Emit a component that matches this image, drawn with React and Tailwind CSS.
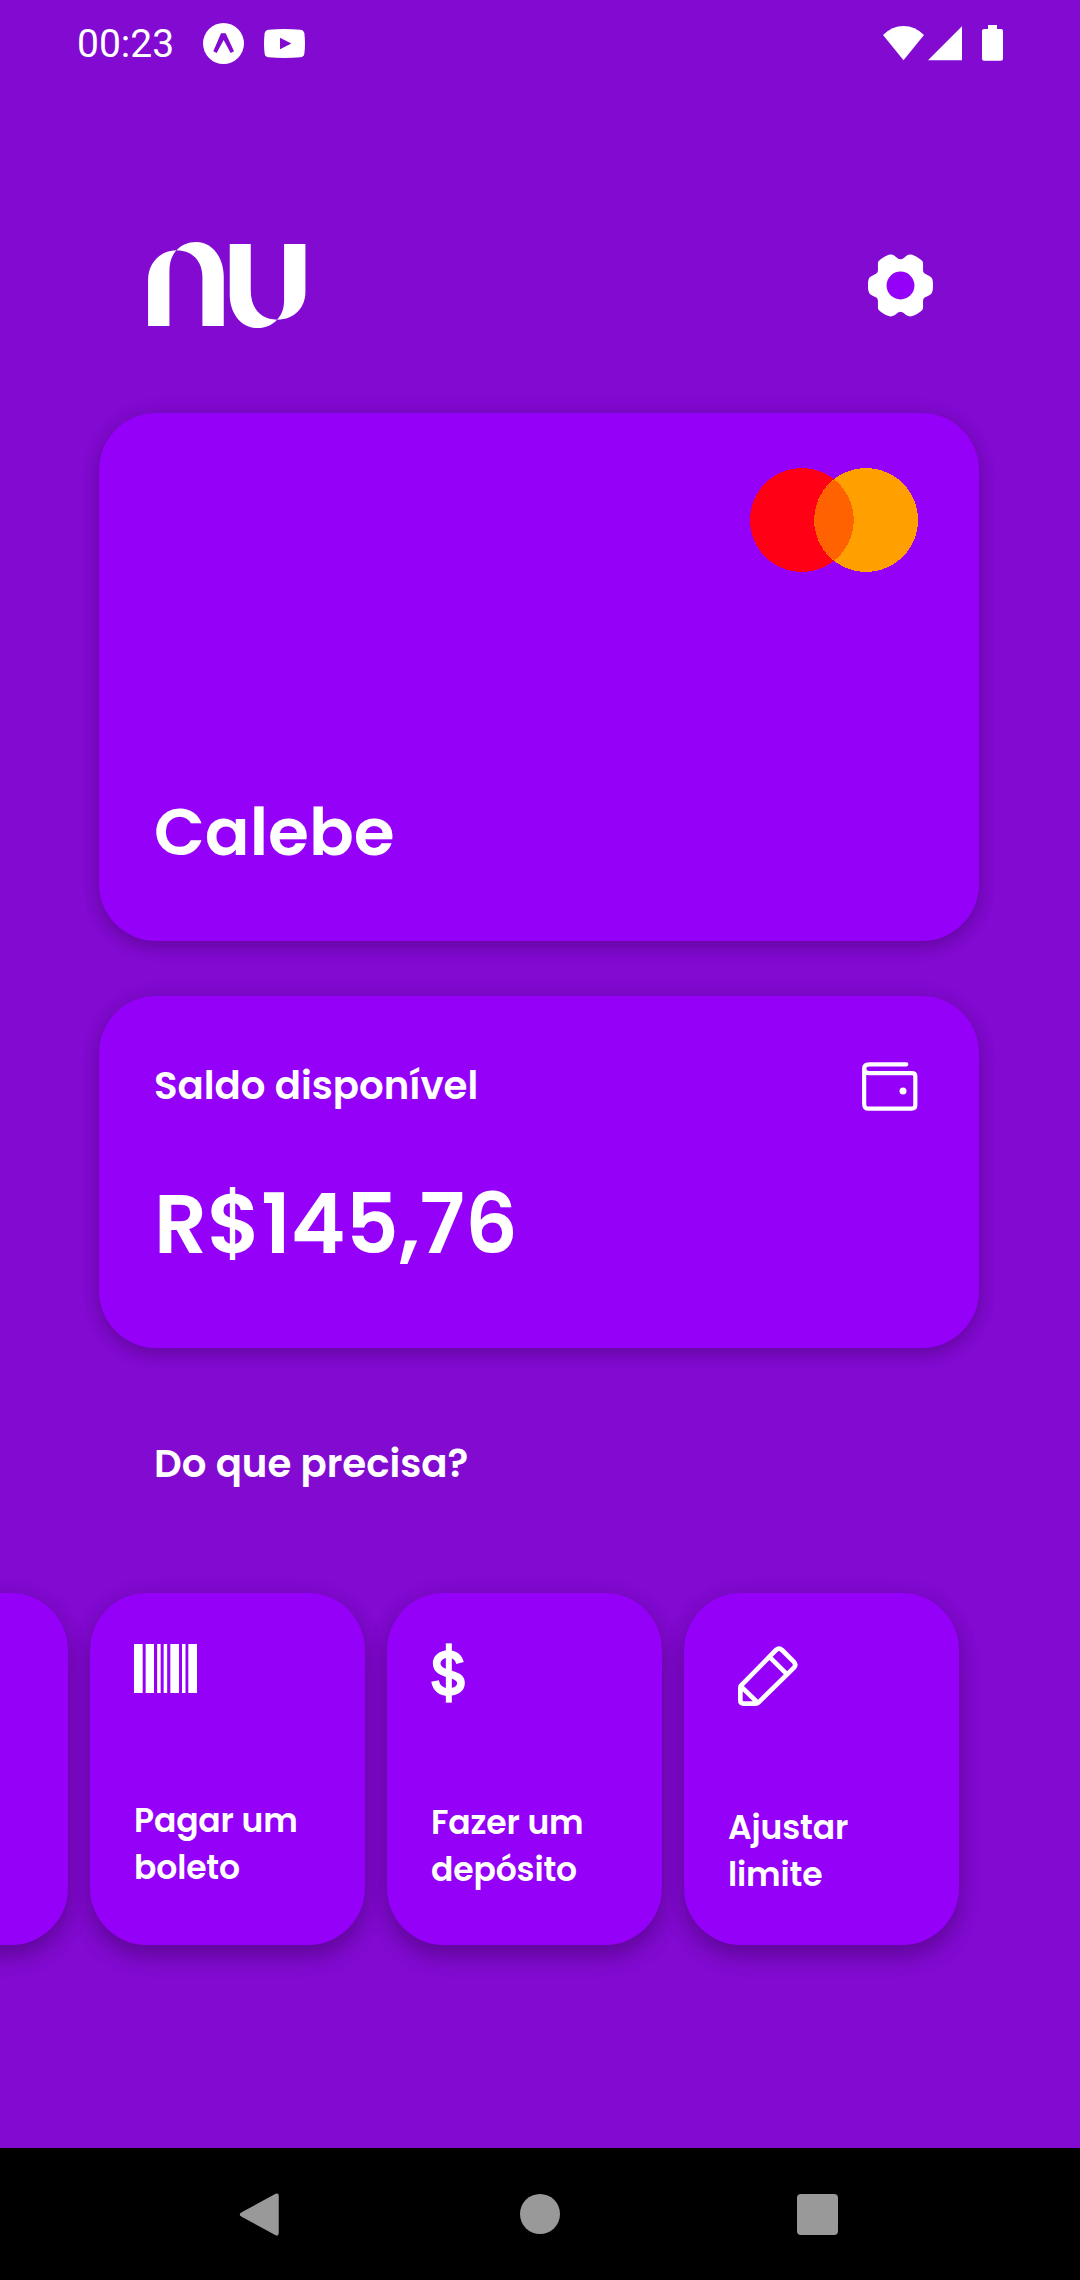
function StatusBar() {
  return (
    <div className="flex h-[87px] items-center justify-between pr-[77px] pl-[77px] font-['Roboto',sans-serif] text-white">
      <div className="flex items-center">
        <span className="w-[126px] text-[39px] leading-[46px]">00:23</span>
        <svg className="h-[41px] w-[41px]" viewBox="0 0 123 123">
          <circle cx="61.5" cy="61.5" r="61.5" fill="#fff" />
          <path
            d="M54 31H68L93 85L83 90L62 51L41 90L31 85Z"
            fill="#820ad1"
          />
        </svg>
        <svg className="ml-[20px] h-[29px] w-[41px]" viewBox="0 0 123 87">
          <path
            d="M14 2Q61 -2 109 2Q119 3 121 13Q125 43 121 74Q119 84 109 85Q61 89 14 85Q4 84 2 74Q-2 43 2 13Q4 3 14 2Z"
            fill="#fff"
          />
          <path d="M48 26L82 43.500L48 61Z" fill="#820ad1" />
        </svg>
      </div>
      <div className="flex items-center pb-[1px]">
        <svg className="h-[35px] w-[41px]" viewBox="0 0 123 105" fill="#fff">
          <path d="M0 27Q27 0 61.500 0Q96 0 123 27L61.500 103Z" />
        </svg>
        <svg className="ml-[4px] h-[35px] w-[34px]" viewBox="0 0 102 105" fill="#fff">
          <path d="M102 1V103H0Z" />
        </svg>
        <svg className="ml-[20px] h-[36px] w-[21px]" viewBox="0 0 63 108" fill="#fff">
          <path d="M18 0H45V12H57Q63 12 63 18V101Q63 107 57 107H6Q0 107 0 101V18Q0 12 6 12H18Z" />
        </svg>
      </div>
    </div>
  );
}

function NuLogo() {
  return (
    <svg className="h-[86px] w-[157.5px]" viewBox="55 66 472 258" fill="#fff">
      <path d="M55 318V180C55 130 90 92 140 91C124 108 119 130 119 155V318Z" />
      <path d="M140 91C155 75 175 66 199 66C250 66 282 115 282 170V318H218V172C218 125 190 91 140 91Z" />
      <path d="M300 72H363V210C363 265 392 299 442 299C427 315 408 324 383 324C330 324 300 275 300 225Z" />
      <path d="M463 72H527V215C527 262 495 298 442 299C458 283 463 262 463 240Z" />
    </svg>
  );
}

function SettingsIcon() {
  return (
    <svg className="h-[63px] w-[65px]" viewBox="82 71 196 188">
      <path
        d="M180 86C172 86 168 79 162 75C154 70 146 71 138 75C129 79 122 84 115 90C111 94 112 100 112 108C112 118 113 125 107 129C98 134 90 137 86 142C82 149 82 157 82 165C82 173 82 181 86 188C90 193 98 196 107 201C113 205 112 212 112 222C112 230 111 236 115 240C122 246 129 251 138 255C146 259 154 260 162 255C168 251 172 244 180 244C188 244 192 251 198 255C206 260 214 259 222 255C231 251 238 246 245 240C249 236 248 230 248 222C248 212 247 205 253 201C262 196 270 193 274 188C278 181 278 173 278 165C278 157 278 149 274 142C270 137 262 134 253 129C247 125 248 118 248 108C248 100 249 94 245 90C238 84 231 79 222 75C214 71 206 70 198 75C192 79 188 86 180 86Z"
        fill="#fff"
      />
      <circle cx="180" cy="165" r="42" fill="#9400f8" />
    </svg>
  );
}

function CardBrand() {
  return (
    <svg
      className="h-[104px] w-[168px] self-end"
      viewBox="89 204 505 312"
      shapeRendering="crispEdges"
    >
      <circle cx="245" cy="360" r="156" fill="#ff0015" />
      <circle cx="438" cy="360" r="156" fill="#ffa000" />
      <path
        d="M341.500 237.500A156 156 0 0 1 341.500 482.500A156 156 0 0 1 341.500 237.500"
        fill="#ff6200"
      />
    </svg>
  );
}

function WalletIcon() {
  return (
    <svg
      className="mt-[5px] h-[49px] w-[56px]"
      viewBox="66 66 168 147"
      fill="none"
      stroke="#fff"
      strokeWidth="12.500"
      strokeLinecap="round"
      strokeLinejoin="round"
    >
      <path d="M199 73H88Q72.500 73 72.500 86V191Q72.500 206 86 206H215Q226 206 226 196V109Q226 99.500 216 99.500H86Q73 99 73 86" />
      <circle cx="189" cy="153" r="10.500" fill="#fff" stroke="none" />
    </svg>
  );
}

function BarcodeIcon() {
  return (
    <svg className="h-[49px] w-[63px]" viewBox="402 192 189 147" fill="#fff">
      <path d="M402 192H428V339H402ZM437 192H462V339H437ZM471.500 192H482V339H471.500ZM491 192H501.500V339H491ZM511 192H537V339H511ZM546 192H556.500V339H546ZM565 192H591V339H565Z" />
    </svg>
  );
}

function DollarIcon() {
  return (
    <svg className="h-[60px] w-[35px]" viewBox="183 189 105 180" fill="none" stroke="#fff">
      <path d="M236.500 190V368" strokeWidth="18" />
      <path
        d="M270 249C266 232 253 222 235 222C214 222 200 234 200 250C200 269 215 275 236 281C258 287 273 293 273 309C273 326 257 336 236 336C213 336 199 324 195 303"
        strokeWidth="23"
      />
    </svg>
  );
}

function PencilIcon() {
  return (
    <svg
      className="ml-[9.5px] h-[60px] w-[60px]"
      viewBox="202 197 180 180"
      fill="none"
      stroke="#fff"
      strokeWidth="14"
      strokeLinejoin="round"
    >
      <path d="M211 316L316 209Q325 201 334 209L369 244Q378 253 370 262L264 366Q260 370 254 370H219Q209 370 209 360V322Q209 318 211 316ZM211 318L262 368M298 231L347 280" />
    </svg>
  );
}

const actions = [
  { lines: ["Pagar um", "boleto"], Icon: BarcodeIcon, iconPad: "pt-[51px]", textPad: "pb-[54px]" },
  { lines: ["Fazer um", "depósito"], Icon: DollarIcon, iconPad: "pt-[50px]", textPad: "pb-[52px]" },
  { lines: ["Ajustar", "limite"], Icon: PencilIcon, iconPad: "pt-[53px]", textPad: "pb-[47px]" },
];

const tile =
  "h-[352px] w-[275px] shrink-0 rounded-[57px] bg-[#9400f8] shadow-[0_12px_21px_rgba(0,0,0,0.24),0_0_24px_rgba(0,0,0,0.05)]";
const panel =
  "rounded-[57px] bg-[#9400f8] shadow-[0_6px_16px_rgba(0,0,0,0.21),0_0_24px_rgba(0,0,0,0.05)]";

function ActionTile({ lines, Icon, iconPad, textPad }) {
  return (
    <div className={`${tile} flex flex-col justify-between pl-[44px]`}>
      <div className={iconPad}>
        <Icon />
      </div>
      <div className={`${textPad} text-[33px] leading-[47px] tracking-[-0.15px]`}>
        {lines.map((line) => (
          <p key={line}>{line}</p>
        ))}
      </div>
    </div>
  );
}

function NavBar() {
  return (
    <div className="flex h-[132px] items-center bg-black pl-[239px]">
      <svg className="h-[45px] w-[41px]" viewBox="0 0 41 45">
        <path
          d="M37 2.500L3 21Q0 22.500 3 24L37 42.500Q39 43.500 39 41V4Q39 1.500 37 2.500Z"
          fill="#999"
          stroke="#999"
          strokeWidth="1.500"
        />
      </svg>
      <div className="ml-[240px] h-[40px] w-[40px] rounded-full bg-[#999]" />
      <div className="ml-[237px] h-[41px] w-[41px] rounded-[4px] bg-[#999]" />
    </div>
  );
}

export default function App() {
  return (
    <div className="flex h-[2280px] w-[1080px] flex-col overflow-hidden bg-[#820ad1] font-['Poppins',sans-serif] font-semibold whitespace-nowrap text-white">
      <div className="font-normal">
        <StatusBar />
      </div>

      <header className="mt-[155px] flex h-[86px] items-center justify-between pr-[147px] pl-[148px]">
        <NuLogo />
        <SettingsIcon />
      </header>

      <main className="flex flex-1 flex-col pt-[85px]">
        <section
          className={`${panel} ml-[99px] flex h-[528px] w-[880px] flex-col justify-between pt-[55px] pr-[61px] pb-[61px] pl-[55px]`}
        >
          <CardBrand />
          <h1 className="text-[66.2px] leading-[96px]">Calebe</h1>
        </section>

        <section
          className={`${panel} mt-[55px] ml-[99px] flex h-[352px] w-[880px] flex-col pt-[61px] pr-[61px] pl-[55px]`}
        >
          <div className="flex h-[56px] items-start justify-between">
            <h2 className="pt-[1px] text-[38.7px] leading-[56px]">Saldo disponível</h2>
            <WalletIcon />
          </div>
          <p className="mt-[51px] text-[82.6px] leading-[120px]">R$145,76</p>
        </section>

        <h2 className="mt-[88px] pl-[154px] text-[38.7px] leading-[56px]">
          Do que precisa?
        </h2>

        <div className="mt-[101px] -ml-[207px] flex gap-[22px]">
          <div className={tile} />
          {actions.map((action) => (
            <ActionTile key={action.lines[0]} {...action} />
          ))}
        </div>
      </main>

      <NavBar />
    </div>
  );
}
